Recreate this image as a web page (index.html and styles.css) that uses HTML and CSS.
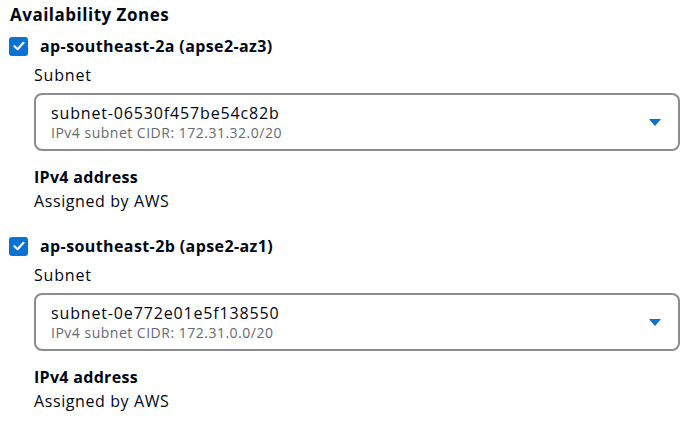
FILE: index.html
```html
<!DOCTYPE html>
<html>
<head>
<meta charset="utf-8">
<link rel="stylesheet" href="styles.css">
</head>
<body>
<div class="page">
  <h2 class="title">Availability Zones</h2>
  <div class="zone">
    <div class="check-row">
      <span class="checkbox"><svg width="12" height="10" viewBox="0 0 12 10"><path d="M1.5 5.2 L4.6 8.2 L10.5 1.8" fill="none" stroke="#fff" stroke-width="2.2" stroke-linecap="round" stroke-linejoin="round"/></svg></span>
      <span class="zone-name">ap-southeast-2a (apse2-az3)</span>
    </div>
    <div class="zone-body">
      <div class="label">Subnet</div>
      <div class="select">
        <div class="select-text">
          <div class="select-main">subnet-06530f457be54c82b</div>
          <div class="select-sub">IPv4 subnet CIDR: 172.31.32.0/20</div>
        </div>
        <span class="caret"></span>
      </div>
      <div class="field-title">IPv4 address</div>
      <div class="field-value">Assigned by AWS</div>
    </div>
  </div>
  <div class="zone">
    <div class="check-row">
      <span class="checkbox"><svg width="12" height="10" viewBox="0 0 12 10"><path d="M1.5 5.2 L4.6 8.2 L10.5 1.8" fill="none" stroke="#fff" stroke-width="2.2" stroke-linecap="round" stroke-linejoin="round"/></svg></span>
      <span class="zone-name">ap-southeast-2b (apse2-az1)</span>
    </div>
    <div class="zone-body">
      <div class="label">Subnet</div>
      <div class="select">
        <div class="select-text">
          <div class="select-main">subnet-0e772e01e5f138550</div>
          <div class="select-sub">IPv4 subnet CIDR: 172.31.0.0/20</div>
        </div>
        <span class="caret"></span>
      </div>
      <div class="field-title">IPv4 address</div>
      <div class="field-value">Assigned by AWS</div>
    </div>
  </div>
</div>
</body>
</html>
```
FILE: styles.css
```css
* { box-sizing: border-box; }
html, body {
  margin: 0;
  padding: 0;
  background: #ffffff;
}
body {
  font-family: "Open Sans", "Liberation Sans", sans-serif;
  color: #000716;
  font-size: 16px;
}
.page {
  padding: 4px 16px 0 10px;
  display: flex;
  flex-direction: column;
}
.title {
  margin: 0;
  font-size: 17px;
  font-weight: 700;
  line-height: 22px;
  letter-spacing: 0.5px;
}
.zone {
  display: flex;
  flex-direction: column;
  margin-top: 9px;
}
.zone + .zone {
  margin-top: 22px;
}
.check-row {
  display: flex;
  align-items: center;
  gap: 12px;
  height: 22px;
}
.checkbox {
  width: 19px;
  height: 19px;
  margin-left: -1px;
  border-radius: 3px;
  background: #0972d3;
  display: flex;
  align-items: center;
  justify-content: center;
}
.zone-name {
  font-weight: 700;
  font-size: 16px;
  line-height: 22px;
  letter-spacing: 0.4px;
}
.zone-body {
  padding-left: 24px;
  display: flex;
  flex-direction: column;
}
.label {
  margin-top: 7px;
  line-height: 22px;
  font-size: 16px;
  letter-spacing: 0.8px;
}
.select {
  margin-top: 7px;
  height: 58px;
  border: 2px solid #8c8c94;
  border-radius: 8px;
  display: flex;
  align-items: center;
  padding: 0 17px 0 15px;
}
.select-text {
  flex: 1;
  display: flex;
  flex-direction: column;
}
.select-main {
  font-size: 16px;
  line-height: 22px;
  letter-spacing: 0.85px;
}
.select-sub {
  font-size: 14px;
  line-height: 18px;
  color: #656871;
  letter-spacing: 0.5px;
}
.caret {
  width: 0;
  height: 0;
  border-left: 6px solid transparent;
  border-right: 6px solid transparent;
  border-top: 7px solid #0972d3;
}
.field-title {
  margin-top: 14px;
  font-weight: 700;
  line-height: 24px;
  letter-spacing: 0.3px;
}
.field-value {
  line-height: 24px;
  letter-spacing: 0.6px;
}
```
